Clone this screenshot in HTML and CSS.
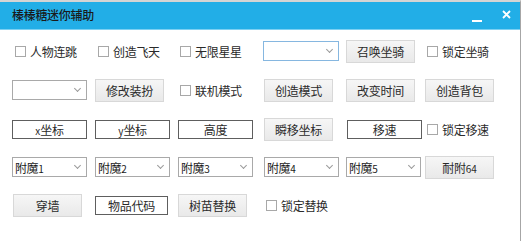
FILE: index.html
```html
<!DOCTYPE html>
<html lang="zh">
<head>
<meta charset="utf-8">
<link rel="stylesheet" href="styles.css">
</head>
<body>
<div class="window">
  <div class="titlebar">
    <span class="title">榛榛糖迷你辅助</span>
    <div class="controls">
      <svg class="min" width="10" height="3" viewBox="0 0 10 3"><rect x="0" y="0" width="10" height="2" fill="#fff"/></svg>
      <svg class="close" width="9" height="9" viewBox="0 0 9 9"><path d="M1 1L8 8M8 1L1 8" stroke="#fff" stroke-width="1.8" fill="none"/></svg>
    </div>
  </div>
  <div class="content">
    <!-- row 1 -->
    <label class="check c1 ml3"><span class="box"></span>人物连跳</label>
    <label class="check c2 ml3"><span class="box"></span>创造飞天</label>
    <label class="check c3 ml2"><span class="box"></span>无限星星</label>
    <div class="combo c4 focus mlm1"><span class="val"></span><span class="arrow"></span></div>
    <button class="btn c5">召唤坐骑</button>
    <label class="check c6 ml2"><span class="box"></span>锁定坐骑</label>

    <!-- row 2 -->
    <div class="combo c1"><span class="val"></span><span class="arrow"></span></div>
    <button class="btn c2">修改装扮</button>
    <label class="check c3 ml2"><span class="box"></span>联机模式</label>
    <button class="btn c4">创造模式</button>
    <button class="btn c5">改变时间</button>
    <button class="btn c6">创造背包</button>

    <!-- row 3 -->
    <button class="plain c1"><small>x</small>坐标</button>
    <button class="plain c2"><small>y</small>坐标</button>
    <button class="plain c3">高度</button>
    <button class="btn c4">瞬移坐标</button>
    <button class="plain c5 ml1">移速</button>
    <label class="check c6 ml2"><span class="box"></span>锁定移速</label>

    <!-- row 4 -->
    <div class="combo c1"><span class="val">附魔<small>1</small></span><span class="arrow"></span></div>
    <div class="combo c2"><span class="val">附魔<small>2</small></span><span class="arrow"></span></div>
    <div class="combo c3"><span class="val">附魔<small>3</small></span><span class="arrow"></span></div>
    <div class="combo c4"><span class="val">附魔<small>4</small></span><span class="arrow"></span></div>
    <div class="combo c5"><span class="val">附魔<small>5</small></span><span class="arrow"></span></div>
    <button class="btn c6">耐附<small>64</small></button>

    <!-- row 5 -->
    <button class="btn c1 ml1">穿墙</button>
    <button class="plain c2 narrow">物品代码</button>
    <button class="btn c3">树苗替换</button>
    <label class="check c4 ml2"><span class="box"></span>锁定替换</label>
  </div>
</div>
</body>
</html>
```

FILE: styles.css
```css
* { box-sizing: border-box; }
html, body {
  margin: 0;
  padding: 0;
  background: #ffffff;
}
body {
  font-family: "Noto Sans CJK SC", "Noto Sans", sans-serif;
  font-size: 12px;
  color: #2a2a2a;
  width: 523px;
  height: 241px;
  overflow: hidden;
}
.window {
  width: 521px;
  height: 241px;
  border-top: 2px solid #d4d4d4;
  border-right: 1px solid #a6a6a6;
  background: #fff;
}
.titlebar {
  height: 28px;
  background: #22aee7;
  display: flex;
  align-items: center;
  justify-content: space-between;
  padding-left: 12px;
  border-bottom: 1px solid #7cd0f2;
}
.title {
  font-size: 12px;
  color: #1a1a1a;
  font-weight: 500;
  letter-spacing: -0.3px;
  margin-top: -2px;
}
.controls {
  display: flex;
  align-items: center;
  height: 100%;
}
.min { margin-right: 20px; margin-top: 11px; }
.close { margin-right: 9px; margin-top: -3px; }

.content {
  display: grid;
  grid-template-columns: 83px 83px 86px 82px 79px 96px;
  grid-template-rows: 38px 40px 39px 36px 40px;
  padding-left: 12px;
  padding-top: 2px;
  align-items: center;
  justify-items: start;
}
.c1 { grid-column: 1; }
.c2 { grid-column: 2; }
.c3 { grid-column: 3; }
.c4 { grid-column: 4; }
.c5 { grid-column: 5; }
.c6 { grid-column: 6; }
.ml1 { margin-left: 1px; }
.ml2 { margin-left: 2px; }
.ml3 { margin-left: 3px; }
.mlm1 { margin-left: -1px; }

.check {
  display: flex;
  align-items: center;
  font-size: 12px;
  color: #2a2a2a;
  letter-spacing: -0.3px;
  white-space: nowrap;
}
.check .box {
  width: 11px;
  height: 11px;
  border: 1px solid #a8a8a8;
  background: #fff;
  margin-right: 4px;
}

.combo {
  width: 75px;
  height: 20px;
  border: 1px solid #a9a9a9;
  background: #fff;
  display: flex;
  align-items: center;
  justify-content: space-between;
  padding: 0 6px 0 2px;
}
.combo.focus {
  width: 76px;
  border-color: #86b7e0;
}
.val {
  font-size: 12px;
  color: #1a1a1a;
  letter-spacing: -0.4px;
  white-space: nowrap;
}
small {
  font-size: 10px;
  letter-spacing: 0;
}
.arrow {
  width: 5px;
  height: 5px;
  border-right: 1px solid #9a9a9a;
  border-bottom: 1px solid #9a9a9a;
  transform: rotate(45deg);
  margin-top: -3px;
}

.btn {
  font-family: inherit;
  font-size: 12px;
  color: #2a2a2a;
  letter-spacing: -0.3px;
  width: 69px;
  height: 23px;
  padding: 0;
  border: 1px solid #d8d8d8;
  background: linear-gradient(#f6f6f6, #e9e9e9);
  white-space: nowrap;
}
.plain {
  font-family: inherit;
  font-size: 12px;
  color: #2a2a2a;
  letter-spacing: -0.3px;
  width: 75px;
  height: 19px;
  padding: 0;
  border: 1px solid #5e5e5e;
  background: #fff;
  white-space: nowrap;
  line-height: 17px;
}
.plain.narrow { width: 73px; }
```
